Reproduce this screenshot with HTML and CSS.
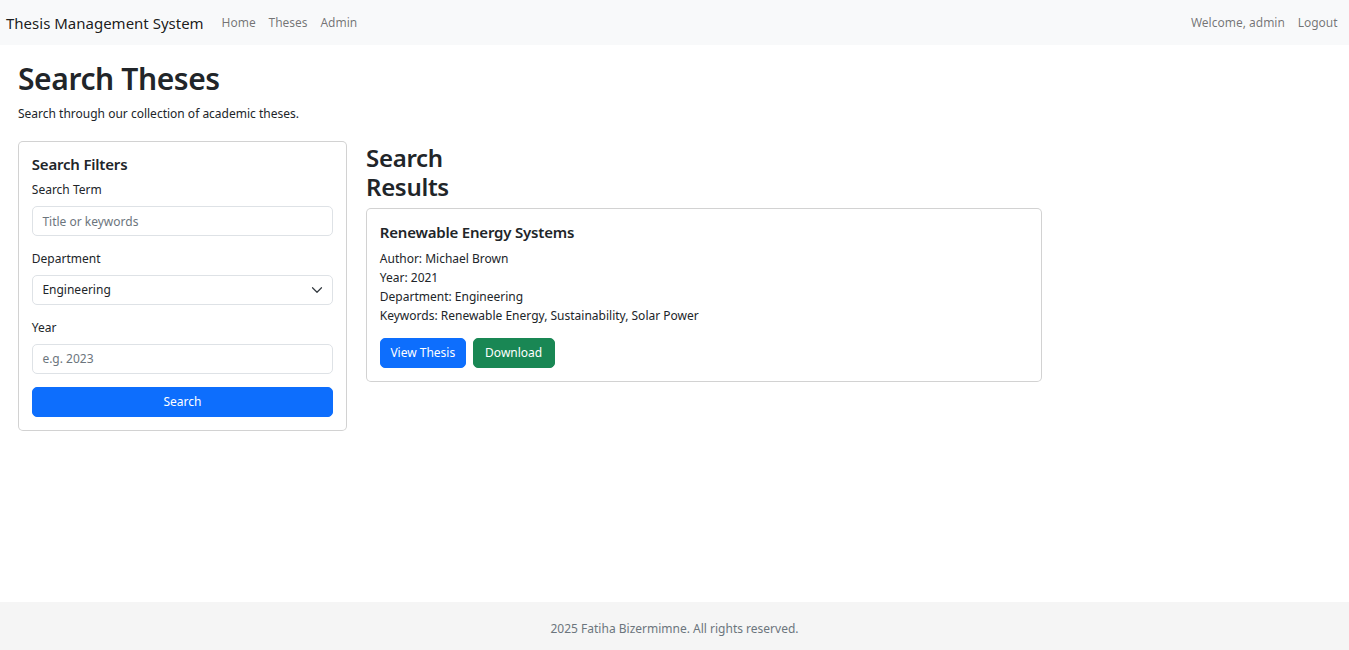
FILE: index.html
```html
<!DOCTYPE html>
<html lang="en">
<head>
<meta charset="utf-8">
<title>Search Theses - Thesis Management System</title>
<link rel="stylesheet" href="styles.css">
</head>
<body>
<nav class="navbar">
  <a class="brand" href="#">Thesis Management System</a>
  <ul class="nav">
    <li><a class="nav-link" href="#">Home</a></li>
    <li><a class="nav-link" href="#">Theses</a></li>
    <li><a class="nav-link" href="#">Admin</a></li>
  </ul>
  <ul class="nav nav-right">
    <li><span class="nav-link">Welcome, admin</span></li>
    <li><a class="nav-link" href="#">Logout</a></li>
  </ul>
</nav>

<main class="main">
  <h1 class="page-title">Search Theses</h1>
  <p class="lead-text">Search through our collection of academic theses.</p>

  <div class="layout">
    <aside class="card filters">
      <div class="card-body">
        <h5 class="card-title">Search Filters</h5>
        <form class="filter-form">
          <div class="field">
            <label class="form-label" for="q">Search Term</label>
            <input class="form-control" id="q" type="text" placeholder="Title or keywords">
          </div>
          <div class="field">
            <label class="form-label" for="dept">Department</label>
            <div class="select-wrap">
              <select class="form-control form-select" id="dept">
                <option>Engineering</option>
              </select>
              <svg class="chevron" viewBox="0 0 16 16" width="12" height="12" aria-hidden="true"><path d="M2 5l6 6 6-6" fill="none" stroke="#343a40" stroke-width="1.6" stroke-linecap="round" stroke-linejoin="round"/></svg>
            </div>
          </div>
          <div class="field">
            <label class="form-label" for="year">Year</label>
            <input class="form-control" id="year" type="text" placeholder="e.g. 2023">
          </div>
          <button class="btn btn-primary btn-block" type="button">Search</button>
        </form>
      </div>
    </aside>

    <section class="results">
      <h2 class="results-title">Search Results</h2>
      <div class="card result-card">
        <div class="card-body result-body">
          <h5 class="card-title result-name">Renewable Energy Systems</h5>
          <p class="meta">Author: Michael Brown</p>
          <p class="meta">Year: 2021</p>
          <p class="meta">Department: Engineering</p>
          <p class="meta">Keywords: Renewable Energy, Sustainability, Solar Power</p>
          <div class="actions">
            <a class="btn btn-primary" href="#">View Thesis</a>
            <a class="btn btn-success" href="#">Download</a>
          </div>
        </div>
      </div>
    </section>
  </div>
</main>

<footer class="footer">
  <span>2025 Fatiha Bizermimne. All rights reserved.</span>
</footer>
</body>
</html>
```

FILE: styles.css
```css
* { box-sizing: border-box; }

html, body { height: 100%; }

body {
  margin: 0;
  font-family: "Noto Sans", "Open Sans", sans-serif;
  font-size: 12px;
  line-height: 19.2px;
  color: #212529;
  background: #fff;
  display: flex;
  flex-direction: column;
  min-height: 100vh;
}

a { text-decoration: none; }

/* Navbar */
.navbar {
  height: 45px;
  background: #f8f9fa;
  display: flex;
  align-items: center;
  padding: 0 5px 0 6px;
  flex-shrink: 0;
}
.brand {
  font-size: 15px;
  line-height: 24px;
  color: rgba(0, 0, 0, 0.9);
  margin-right: 11.5px;
  white-space: nowrap;
}
.nav {
  list-style: none;
  margin: 0;
  padding: 0;
  display: flex;
}
.nav-right { margin-left: auto; }
.nav-link {
  display: block;
  padding: 6px 6.4px;
  color: rgba(0, 0, 0, 0.55);
  font-size: 12px;
  line-height: 19.2px;
}

/* Main */
.main {
  flex: 1 0 auto;
  padding: 0 18px;
}
.page-title {
  font-size: 30px;
  font-weight: 600;
  letter-spacing: -0.4px;
  line-height: 38.4px;
  margin: 15px 0 5.4px;
  color: #212529;
}
.lead-text {
  margin: 0 0 18px;
}

.layout {
  display: grid;
  grid-template-columns: 329px 676px;
  column-gap: 19px;
  align-items: start;
}

.card {
  border: 1px solid rgba(0, 0, 0, 0.175);
  border-radius: 5px;
  background: #fff;
}
.card-body { padding: 12.8px; }
.result-body { padding: 14.3px 12.8px 13.3px; }
.card-title {
  font-size: 15px;
  font-weight: 600;
  letter-spacing: -0.2px;
  line-height: 19.2px;
  margin: 0 0 6.4px;
}

.field { margin-bottom: 12.8px; }
.form-label {
  display: block;
  margin-bottom: 6.4px;
}
.form-control {
  display: block;
  width: 100%;
  height: 30.4px;
  padding: 0 9.6px;
  font: inherit;
  font-size: 12px;
  color: #212529;
  background: #fff;
  border: 1px solid #dee2e6;
  border-radius: 5px;
  outline: none;
}
.form-control::placeholder { color: #6c757d; opacity: 1; }
.select-wrap { position: relative; }
.form-select {
  appearance: none;
  -webkit-appearance: none;
  padding-right: 30px;
}
.chevron {
  position: absolute;
  right: 10.5px;
  top: 9.5px;
  pointer-events: none;
}

.btn {
  display: inline-flex;
  align-items: center;
  justify-content: center;
  height: 30.4px;
  padding: 0 9.6px;
  font: inherit;
  font-size: 12px;
  color: #fff;
  border: 1px solid transparent;
  border-radius: 5px;
  cursor: pointer;
}
.btn-primary { background: #0d6efd; border-color: #0d6efd; }
.btn-success { background: #198754; border-color: #198754; padding: 0 11.3px; }
.btn-block { width: 100%; }

.results-title {
  font-size: 24px;
  font-weight: 600;
  letter-spacing: -0.3px;
  line-height: 29.5px;
  max-width: 100px;
  margin: 1.5px 0 6px;
}
.result-name { margin-bottom: 7.4px; }
.meta {
  margin: 0;
  line-height: 19px;
}
.actions {
  display: flex;
  gap: 7px;
  margin-top: 12.4px;
}

/* Footer */
.footer {
  flex-shrink: 0;
  background: #f5f5f5;
  text-align: center;
  color: #6c757d;
  padding: 16.8px 0 12px;
  line-height: 19.2px;
}
```
